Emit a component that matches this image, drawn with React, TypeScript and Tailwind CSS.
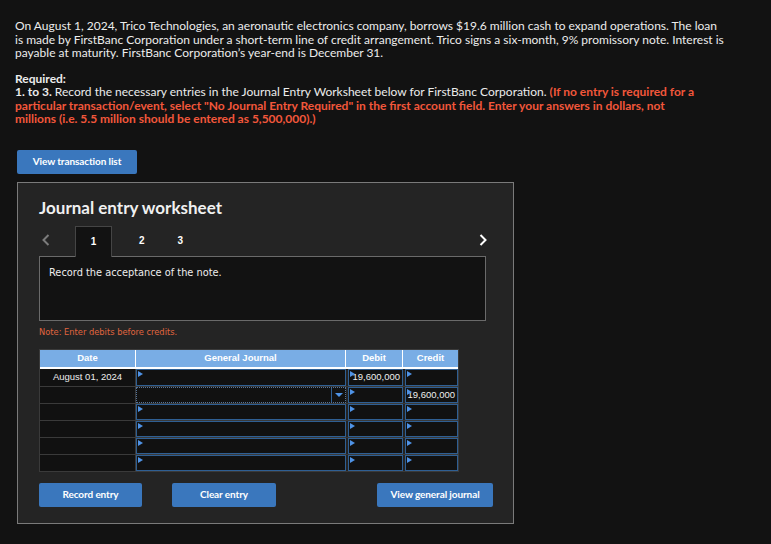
import React from "react";

const rows = [
  { date: "August 01, 2024", debit: "19,600,000", credit: "", focused: false },
  { date: "", debit: "", credit: "19,600,000", focused: true },
  { date: "", debit: "", credit: "", focused: false },
  { date: "", debit: "", credit: "", focused: false },
  { date: "", debit: "", credit: "", focused: false },
  { date: "", debit: "", credit: "", focused: false },
];

function Marker() {
  return (
    <span className="absolute left-[1px] top-[1px] w-0 h-0 border-t-[3px] border-b-[3px] border-l-[5px] border-t-transparent border-b-transparent border-l-[#4f93e6]" />
  );
}

function InputCell({ value, marker = true }: { value?: string; marker?: boolean }) {
  return (
    <div className="relative h-full border border-[#2f5f93] bg-[#111111] flex items-center justify-end pr-[2px]">
      {marker && <Marker />}
      {value && <span className="text-[9.5px] text-[#eeeeee]">{value}</span>}
    </div>
  );
}

function BlueButton({ label, className }: { label: string; className: string }) {
  return (
    <button
      className={`h-[24px] rounded-[2px] bg-[#3a77bd] text-white text-[10px] font-bold tracking-[-0.1px] ${className}`}
      style={{ fontFamily: "Lato, sans-serif" }}
    >
      {label}
    </button>
  );
}

export default function App() {
  return (
    <div
      className="min-h-screen bg-[#121212] text-[#ececec] pl-[15px] pt-[19px] pb-[19px]"
      style={{ fontFamily: "Lato, 'Open Sans', sans-serif" }}
    >
      {/* Problem text */}
      <div className="text-[12px] leading-[13.5px] whitespace-nowrap">
        <div>On August 1, 2024, Trico Technologies, an aeronautic electronics company, borrows $19.6 million cash to expand operations. The loan</div>
        <div>is made by FirstBanc Corporation under a short-term line of credit arrangement. Trico signs a six-month, 9% promissory note. Interest is</div>
        <div>payable at maturity. FirstBanc Corporation’s year-end is December 31.</div>
      </div>

      <div className="mt-[12px] text-[12px] leading-[13.5px] whitespace-nowrap">
        <div className="font-bold">Required:</div>
        <div>
          <span className="font-bold">1. to 3.</span> Record the necessary entries in the Journal Entry Worksheet below for FirstBanc Corporation.{" "}
          <span className="font-bold text-[#f2573b]">(If no entry is required for a</span>
        </div>
        <div className="font-bold text-[#f2573b]">
          particular transaction/event, select "No Journal Entry Required" in the first account field. Enter your answers in dollars, not
        </div>
        <div className="font-bold text-[#f2573b]">millions (i.e. 5.5 million should be entered as 5,500,000).)</div>
      </div>

      <BlueButton label="View transaction list" className="mt-[24px] ml-[2px] w-[120px] block" />

      {/* Worksheet panel */}
      <div className="mt-[8px] ml-[2px] w-[497px] h-[342px] border border-[#7a7a7a] bg-[#242424] pl-[21px] pt-[15px]">
        <h2
          className="text-[17px] font-bold text-[#f0f0f0] leading-[20px]"
          style={{ fontFamily: "Lato, sans-serif" }}
        >
          Journal entry worksheet
        </h2>

        {/* Tabs */}
        <div className="mt-[7px] flex items-end h-[31px] w-[467px] relative">
          <svg width="8" height="12" viewBox="0 0 8 12" className="ml-[3px] mb-[10px]">
            <path d="M6.5 1 L1.5 6 L6.5 11" stroke="#7c7c7c" strokeWidth="2" fill="none" />
          </svg>
          <div className="ml-[25px] w-[37px] h-[31px] bg-[#121212] border border-b-0 border-[#454545] flex items-center justify-center text-[10px] font-bold text-white relative z-10 top-[1px]" style={{ fontFamily: "'Liberation Sans', Arial, sans-serif" }}>
            1
          </div>
          <div className="ml-[27px] h-[31px] flex items-center text-[10px] font-bold text-white" style={{ fontFamily: "'Liberation Sans', Arial, sans-serif" }}>2</div>
          <div className="ml-[33px] h-[31px] flex items-center text-[10px] font-bold text-white" style={{ fontFamily: "'Liberation Sans', Arial, sans-serif" }}>3</div>
          <svg width="8" height="12" viewBox="0 0 8 12" className="ml-auto mr-[19px] mb-[10px]">
            <path d="M1.5 1 L6.5 6 L1.5 11" stroke="#ffffff" strokeWidth="2" fill="none" />
          </svg>
        </div>

        <div
          className="w-[447px] h-[65px] bg-[#121212] border border-[#6a6a6a] pl-[9px] pt-[9px] text-[9.8px] text-[#eeeeee]"
          style={{ fontFamily: "'DejaVu Sans', Verdana, sans-serif" }}
        >
          Record the acceptance of the note.
        </div>

        <div
          className="mt-[6px] text-[8.3px] text-[#e0643f] leading-[10px]"
          style={{ fontFamily: "'DejaVu Sans', Verdana, sans-serif" }}
        >
          Note: Enter debits before credits.
        </div>

        {/* Journal table */}
        <div
          className="mt-[12px] w-[420px] border border-[#3a3a3a] bg-[#242424]"
          style={{ fontFamily: "'Liberation Sans', Arial, sans-serif" }}
        >
          <div className="grid grid-cols-[96px_210px_57px_55px] h-[19px] bg-[#79ade5] border-b-2 border-white text-[9.5px] font-bold text-white">
            <div className="flex items-center justify-center border-r border-white">Date</div>
            <div className="flex items-center justify-center border-r border-white">General Journal</div>
            <div className="flex items-center justify-center border-r border-white">Debit</div>
            <div className="flex items-center justify-center">Credit</div>
          </div>
          {rows.map((r, i) => (
            <div
              key={i}
              className={`grid grid-cols-[96px_210px_57px_55px] h-[17px] ${i > 0 ? "border-t border-[#3a3a3a]" : ""}`}
            >
              <div className="bg-[#111111] border-r border-[#3a3a3a] flex items-center justify-center text-[9.5px] text-[#eeeeee]">
                {r.date}
              </div>
              {r.focused ? (
                <div className="h-full border border-dotted border-[#55749a] bg-[#111111] flex justify-end">
                  <div className="w-[14px] border-l border-[#2f5f93] flex items-center justify-center">
                    <span className="w-0 h-0 border-l-[4px] border-r-[4px] border-t-[4px] border-l-transparent border-r-transparent border-t-[#4f93e6]" />
                  </div>
                </div>
              ) : (
                <InputCell />
              )}
              <div className="pl-[2px]">
                <InputCell value={r.debit} />
              </div>
              <div className="pl-[2px]">
                <InputCell value={r.credit} />
              </div>
            </div>
          ))}
        </div>

        {/* Actions */}
        <div className="mt-[11px] flex w-[454px]">
          <BlueButton label="Record entry" className="w-[103px]" />
          <BlueButton label="Clear entry" className="ml-[30px] w-[104px]" />
          <BlueButton label="View general journal" className="ml-auto w-[116px]" />
        </div>
      </div>
    </div>
  );
}
